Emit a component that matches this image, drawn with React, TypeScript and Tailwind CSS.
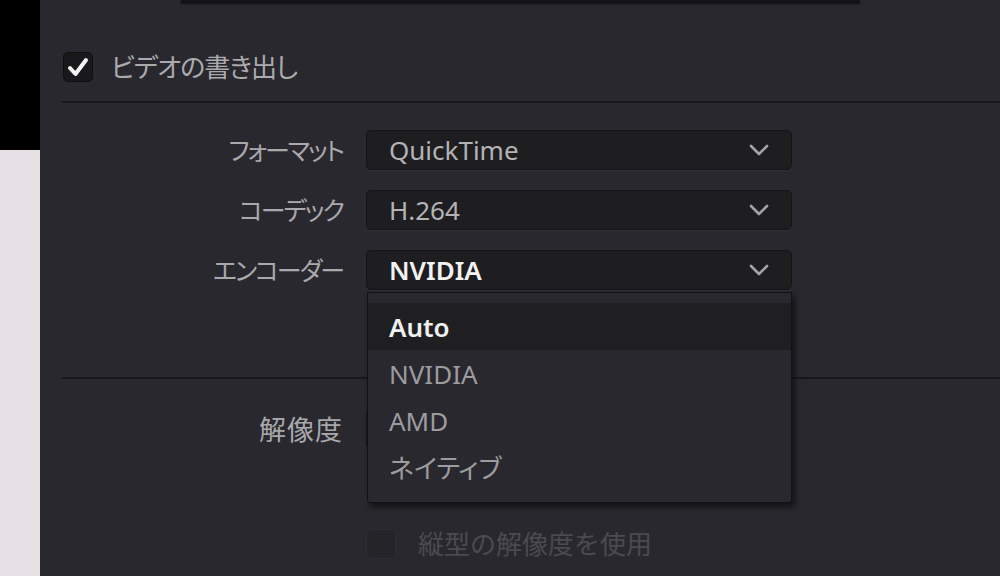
const font = "font-['Noto_Sans','Noto_Sans_CJK_JP',sans-serif] [font-feature-settings:'palt']"

interface SelectProps {
  value?: string
  strong?: boolean
  children?: React.ReactNode
}

function Chevron() {
  return (
    <svg width="20" height="12" viewBox="0 0 20 12" className="shrink-0">
      <polyline
        points="2,2 10,10 18,2"
        fill="none"
        stroke="#a3a3a6"
        strokeWidth="2.6"
        strokeLinecap="round"
        strokeLinejoin="round"
      />
    </svg>
  )
}

function CheckMark() {
  return (
    <svg width="24" height="24" viewBox="0 0 24 24">
      <polyline
        points="4,13 9.5,19 20,5"
        fill="none"
        stroke="#f4f4f4"
        strokeWidth="4"
        strokeLinecap="round"
        strokeLinejoin="round"
      />
    </svg>
  )
}

function Select({ value, strong, children }: SelectProps) {
  return (
    <div className="relative w-[426px]">
      <div className="h-[40px] flex items-center justify-between pl-[22px] pr-[22px] rounded-[5px] bg-[#1e1d20] border border-[#141317] shadow-[0_1px_0_#323137]">
        <span
          className={
            strong
              ? 'text-[26px] font-semibold text-[#f2f2f2] leading-none'
              : 'text-[26px] text-[#b3b3b5] leading-none'
          }
        >
          {value}
        </span>
        <Chevron />
      </div>
      {children}
    </div>
  )
}

interface RowProps {
  label: string
  wide?: boolean
  children: React.ReactNode
}

function Row({ label, wide, children }: RowProps) {
  return (
    <div className="flex items-center gap-[23px]">
      <span
        className={
          wide
            ? 'w-[303px] text-right text-[27px] tracking-[1px] text-[#a9a9ac] leading-none'
            : 'w-[303px] text-right text-[25px] tracking-[-2px] text-[#a9a9ac] leading-none'
        }
      >
        {label}
      </span>
      {children}
    </div>
  )
}

const encoders = ['Auto', 'NVIDIA', 'AMD', 'ネイティブ']

export default function App() {
  return (
    <div className={`flex w-[1000px] h-[576px] overflow-hidden ${font}`}>
      {/* sliver of the window behind */}
      <div className="w-[40px] flex flex-col">
        <div className="h-[150px] bg-black" />
        <div className="flex-1 bg-[#e7e0e4]" />
      </div>

      <div className="flex-1 flex flex-col bg-[#29282e]">
        <div className="h-[3px] ml-[141px] w-[679px] bg-[#141318] shadow-[0_1px_2px_#0e0d12]" />

        {/* export video toggle */}
        <div className="mt-[49px] ml-[23px] flex items-center gap-[18px]">
          <div className="w-[30px] h-[30px] rounded-[5px] bg-[#19181b] border border-[#0f0e12] flex items-center justify-center">
            <CheckMark />
          </div>
          <span className="text-[26px] tracking-[-1px] text-[#ababae] leading-none">
            ビデオの書き出し
          </span>
        </div>

        <div className="mt-[19px] ml-[22px] h-[2px] bg-[#18171c]" />

        <div className="mt-[27px] flex flex-col gap-[20px]">
          <Row label="フォーマット">
            <Select value="QuickTime" />
          </Row>
          <Row label="コーデック">
            <Select value="H.264" />
          </Row>
          <Row label="エンコーダー">
            <Select value="NVIDIA" strong>
              <div className="absolute z-10 left-[1px] right-0 top-[calc(100%+2px)] pt-[10px] pb-[11px] bg-[#29282e] border border-[#121116] rounded-b-[3px] shadow-[3px_4px_6px_rgba(0,0,0,0.55)]">
                {encoders.map((item, i) => (
                  <div
                    key={item}
                    className={
                      i === 0
                        ? 'h-[47px] flex items-center pl-[21px] bg-[#1f1e21] text-[26px] font-semibold text-[#f0f0f0] leading-none'
                        : 'h-[47px] flex items-center pl-[21px] text-[26px] text-[#9c9c9f] leading-none'
                    }
                  >
                    {item}
                  </div>
                ))}
              </div>
            </Select>
          </Row>
        </div>

        <div className="mt-[87px] ml-[22px] h-[2px] bg-[#18171c]" />

        {/* resolution row sits under the open encoder menu */}
        <div className="mt-[30px]">
          <Row label="解像度" wide>
            <Select />
          </Row>
        </div>

        {/* vertical resolution (disabled) */}
        <div className="mt-[80px] pl-[326px] flex items-center gap-[22px]">
          <div className="w-[30px] h-[30px] rounded-[5px] bg-[#252429] border border-[#2e2d33]" />
          <span className="text-[26px] text-[#4b4a51] leading-none [font-feature-settings:normal]">
            縦型の解像度を使用
          </span>
        </div>
      </div>
    </div>
  )
}
